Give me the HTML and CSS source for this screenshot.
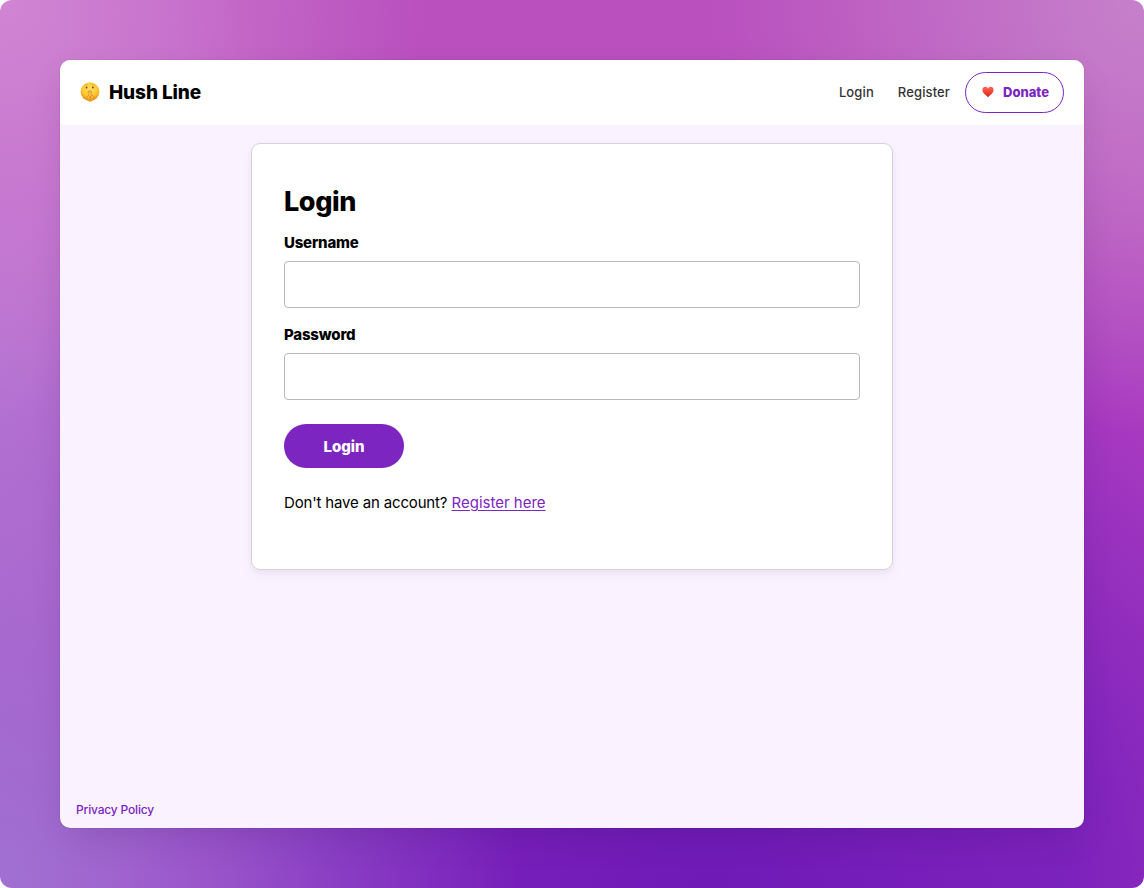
FILE: index.html
```html
<!DOCTYPE html>
<html lang="en">
<head>
<meta charset="utf-8">
<title>Login - Hush Line</title>
<link rel="stylesheet" href="styles.css">
</head>
<body>
<div class="backdrop">
  <div class="window">
    <header class="header">
      <a class="brand">
        <svg class="face" viewBox="0 0 20 20" aria-hidden="true">
          <defs>
            <radialGradient id="skin" cx=".5" cy=".35" r=".65"><stop offset="0" stop-color="#ffe064"/><stop offset=".65" stop-color="#fdc52f"/><stop offset="1" stop-color="#e8860c"/></radialGradient>
            <linearGradient id="hand" x2="0" y2="1"><stop offset="0" stop-color="#ffdc67"/><stop offset="1" stop-color="#f3a31b"/></linearGradient>
          </defs>
          <circle cx="10" cy="9.6" r="9.4" fill="url(#skin)"/>
          <ellipse cx="6.6" cy="5.6" rx=".85" ry="1" fill="#67400d"/>
          <ellipse cx="12.9" cy="5.6" rx=".85" ry="1" fill="#67400d"/>
          <path d="M4.8 3.4q1-1.1 2.4-.7M12.6 2.7q1.5-.3 2.3.8" fill="none" stroke="#ca861f" stroke-width=".5" stroke-linecap="round"/>
          <path d="M8 9.9q1.8-1.1 3.6 0" fill="none" stroke="#b56a18" stroke-width=".8" stroke-linecap="round"/>
          <path d="M9.1 9.3q0-1 .8-1t.9 1l.3 4q1.8-.9 2.3 1.1.3 3-1.5 4.4-1.7.9-3.5.1-1.8-1.2-1.4-3.6.2-1.7 1.7-2z" fill="url(#hand)" stroke="#d28a20" stroke-width=".6"/>
          <path d="M8.7 14.4l1.5 1M11.1 13.7l-1 2.9M9 17.2h2.3" stroke="#c47b18" stroke-width=".55" fill="none"/>
        </svg>
        <span class="brand-name">Hush Line</span>
      </a>
      <nav class="nav">
        <a class="nav-login">Login</a>
        <a class="nav-register">Register</a>
        <a class="donate">
          <svg class="heart" viewBox="0 0 12 12" aria-hidden="true">
            <defs><linearGradient id="red" x2="0" y2="1"><stop offset="0" stop-color="#ff6754"/><stop offset="1" stop-color="#d91f14"/></linearGradient></defs>
            <path d="M6 11.4C4.6 9.4.4 7.4.4 3.8.4.5 4.6-.2 6 2.4 7.4-.2 11.6.5 11.6 3.8 11.6 7.4 7.4 9.4 6 11.4Z" fill="url(#red)"/>
          </svg>
          <span class="donate-text">Donate</span>
        </a>
      </nav>
    </header>
    <main class="main">
      <form class="card">
        <h1 class="title">Login</h1>
        <label class="label" for="username">Username</label>
        <input class="field" id="username" type="text">
        <label class="label label-password" for="password">Password</label>
        <input class="field" id="password" type="password">
        <button class="submit" type="button">Login</button>
        <p class="signup"><span class="question">Don't have an account?</span> <a class="signup-link">Register here</a></p>
      </form>
    </main>
    <footer class="footer"><a class="privacy">Privacy Policy</a></footer>
  </div>
</div>
</body>
</html>
```
FILE: styles.css
```css
* { box-sizing: border-box; }
body {
  margin: 0;
  background: #fff;
  color: #000;
  font-family: Inter, "Liberation Sans", sans-serif;
}
.backdrop {
  height: 888px;
  padding: 60px;
  border-radius: 12px;
  background:
    radial-gradient(circle at 0 0, #d185d3 0, #d185d300 420px),
    radial-gradient(circle at 100% 0, #c681cb 0, #c681cb00 430px),
    radial-gradient(ellipse 520px 720px at 0 100%, #a070d2 0, #a070d200 100%),
    radial-gradient(ellipse 300px 620px at 0 40%, #bd74d2 0, #bd74d200 100%),
    radial-gradient(ellipse 1050px 888px at 62% 100%, #6f1ab7 0, #7d22bc 35%, #a83ac0 66%, #b950be 90%);
}
.window {
  display: flex;
  flex-direction: column;
  height: 768px;
  border-radius: 10px;
  overflow: hidden;
  background: #faf3ff;
  box-shadow: 0 0 1px rgba(0,0,0,.45), 0 14px 36px -8px rgba(30,0,70,.17);
}
.header {
  display: flex;
  align-items: center;
  justify-content: space-between;
  height: 65px;
  padding: 0 20px;
  border-radius: 0 0 4px 4px;
  background: #fff;
}
.brand { display: flex; align-items: center; gap: 9px; }
.face { width: 20px; height: 20px; margin-bottom: 2px; }
.brand-name { font-size: 19px; font-weight: 800; letter-spacing: -.1px; }
.nav { display: flex; align-items: center; font-size: 13px; font-weight: 450; color: #333; }
.nav-login, .nav-register { margin-top: -1px; letter-spacing: .12px; }
.nav-register { margin-right: 15px; margin-left: 24px; }
.donate {
  display: flex;
  align-items: center;
  gap: 9px;
  width: 99px;
  height: 41px;
  padding-left: 16px;
  border: 1px solid #7d25c1;
  border-radius: 21px;
  color: #7d25c1;
  font-weight: 800;
}
.donate-text { margin-top: -1px; }
.heart { width: 12px; height: 12px; margin-top: -2px; }
.main { flex: 1; padding-top: 18px; }
.card {
  display: flex;
  flex-direction: column;
  width: 642px;
  height: 427px;
  margin: 0 auto;
  padding: 40px 32px 0;
  border: 1px solid #d9d0df;
  border-radius: 9px;
  background: #fff;
  box-shadow: 0 4px 10px rgba(60,20,90,.08);
}
.title { margin: 0; font-size: 27px; line-height: 36px; font-weight: 800; letter-spacing: -.4px; }
.label { margin-top: 13px; font-size: 15px; line-height: 20px; font-weight: 800; letter-spacing: -.2px; }
.label-password { margin-top: 17px; }
.field {
  width: 576px;
  height: 47px;
  margin-top: 8px;
  padding: 0 12px;
  border: 1px solid #b9b9b9;
  border-radius: 4px;
  background: #fff;
}
.submit {
  width: 120px;
  height: 44px;
  margin-top: 24px;
  border: 0;
  border-radius: 22px;
  background: #7d25c1;
  color: #fff;
  font: 800 15px Inter, sans-serif;
}
.signup { margin: 24px 0 0; font-size: 15px; line-height: 22px; white-space: nowrap; }
.question { letter-spacing: -.16px; }
.signup-link { color: #7d25c1; text-decoration: underline; text-underline-offset: 2px; }
.footer { height: 36px; padding: 9px 16px 0; font-size: 12px; line-height: 18px; font-weight: 500; }
.privacy { color: #7d25c1; letter-spacing: -.17px; }
```
